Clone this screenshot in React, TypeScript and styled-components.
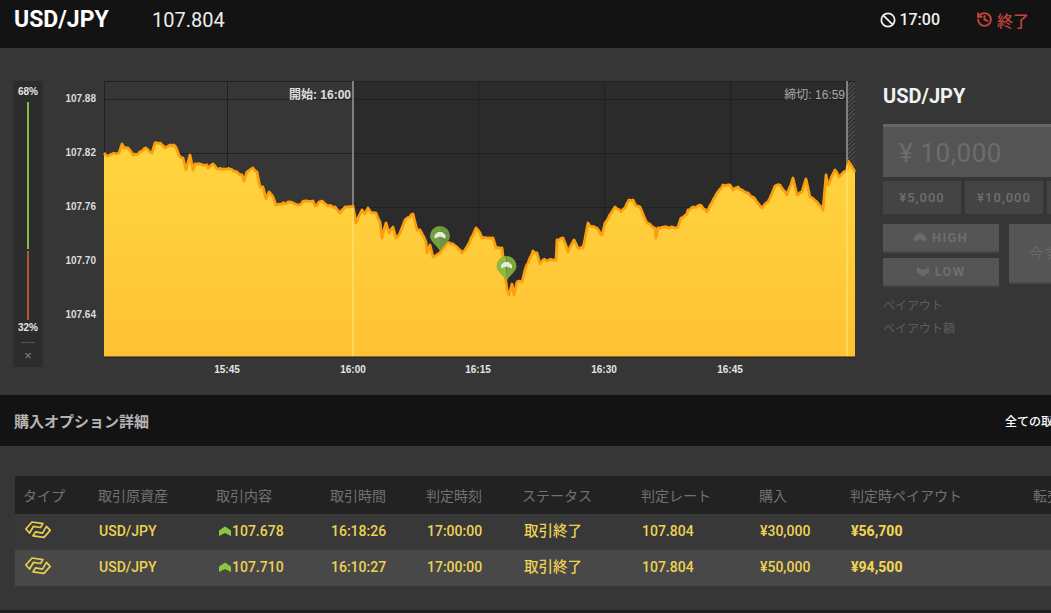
import React from 'react';
import styled, { createGlobalStyle } from 'styled-components';
import { Ban, History } from 'lucide-react';

const Global = createGlobalStyle`
  html, body { margin: 0; padding: 0; background: #363636; overflow: hidden; }
  body { font-family: Roboto, "Noto Sans CJK JP", sans-serif; }
`;

const Page = styled.div`
  width: 1051px;
  height: 613px;
  overflow: hidden;
  background: #1f1f1f;
`;

const Header = styled.header`
  height: 48px;
  box-sizing: border-box;
  padding: 0 22px 9px 14px;
  background: #141314;
  display: flex;
  align-items: center;
  color: #fff;
`;
const Pair = styled.div`
  font-size: 23px;
  font-weight: 700;
  width: 138px;
`;
const Rate = styled.div`
  font-size: 20px;
  font-weight: 400;
  color: #eee;
  flex: 1;
  padding-top: 1px;
`;
const Expiry = styled.div<{ $red?: boolean }>`
  display: flex;
  align-items: center;
  gap: ${p => (p.$red ? 4 : 3)}px;
  font-size: 16px;
  font-weight: 500;
  color: ${p => (p.$red ? '#c0443a' : '#f0f0f0')};
  margin-left: ${p => (p.$red ? 36 : 0)}px;
`;

const Main = styled.section`
  height: 347px;
  box-sizing: border-box;
  padding: 33px 0 0 13px;
  background: #363636;
  display: flex;
  align-items: flex-start;
`;
const Sentiment = styled.div`
  width: 30px;
  height: 286px;
  background: #2c2c2c;
  flex: none;
  display: flex;
  flex-direction: column;
  align-items: center;
  font: 700 10px "Liberation Sans", sans-serif;
  color: #e4e4e4;
  padding-top: 5px;
  box-sizing: border-box;
`;
const Bar = styled.div<{ $color: string; $h: number; $gap: number }>`
  width: 2px;
  height: ${p => p.$h}px;
  margin-top: ${p => p.$gap}px;
  background: ${p => p.$color};
`;
const Pct = styled.div<{ $mt?: number }>`
  line-height: 12px;
  margin-top: ${p => p.$mt ?? 0}px;
`;
const Close = styled.div`
  width: 14px;
  margin-top: 8px;
  padding-top: 5px;
  border-top: 1px solid #555;
  text-align: center;
  font: 400 13px "Liberation Sans", sans-serif;
  color: #8a8a8a;
`;
const ChartSvg = styled.svg`
  flex: none;
  display: block;
  text {
    font-family: "Liberation Sans", "Noto Sans CJK JP", sans-serif;
  }
`;

const Side = styled.aside`
  flex: none;
  width: 300px;
  margin-left: 27px;
  display: flex;
  flex-direction: column;
`;
const SideTitle = styled.h2`
  margin: 3px 0 0;
  font-size: 20px;
  line-height: 24px;
  font-weight: 700;
  color: #f2f2f2;
`;
const Amount = styled.div`
  margin-top: 16px;
  height: 53px;
  box-sizing: border-box;
  border-top: 3px solid #666;
  background: #545454;
  color: #6c6c6c;
  font-size: 26px;
  line-height: 52px;
  padding-left: 16px;
  letter-spacing: 0.6px;
`;
const Chips = styled.div`
  margin-top: 4px;
  display: flex;
  gap: 4px;
`;
const Chip = styled.div`
  width: 78px;
  height: 33px;
  background: #444;
  color: #6f6f6f;
  font-size: 13px;
  font-weight: 500;
  letter-spacing: 1px;
  display: flex;
  align-items: center;
  justify-content: center;
  flex: none;
`;
const Trade = styled.div`
  margin-top: 10px;
  display: flex;
  gap: 10px;
`;
const Dirs = styled.div`
  width: 116px;
  display: flex;
  flex-direction: column;
  gap: 5px;
`;
const Dir = styled.div`
  height: 29px;
  box-sizing: border-box;
  background: #555;
  border-bottom: 2px solid #484848;
  color: #6e6e6e;
  font-size: 13px;
  font-weight: 700;
  letter-spacing: 1.2px;
  display: flex;
  align-items: center;
  justify-content: center;
  gap: 6px;
`;
const Now = styled.div`
  width: 130px;
  height: 60px;
  box-sizing: border-box;
  background: #555;
  border-bottom: 2px solid #484848;
  color: #6a6a6a;
  font-size: 14px;
  line-height: 58px;
  padding-left: 20px;
`;
const Payout = styled.div<{ $mt: number }>`
  margin-top: ${p => p.$mt}px;
  font-size: 12px;
  line-height: 16px;
  color: #5c5c5c;
`;

const SectionBar = styled.div`
  height: 51px;
  background: #141314;
  display: flex;
  align-items: center;
  justify-content: space-between;
  padding-left: 14px;
`;
const SectionTitle = styled.h3`
  margin: 0;
  font-size: 15px;
  font-weight: 700;
  color: #b4b4b4;
`;
const SectionLink = styled.div`
  width: 46px;
  overflow: hidden;
  white-space: nowrap;
  font-size: 12px;
  font-weight: 500;
  color: #fff;
`;

const Lower = styled.section`
  height: 164px;
  box-sizing: border-box;
  padding: 30px 0 0 15px;
  background: #363636;
`;
const cols = '75px 118px 114px 96px 96px 119px 118px 91px 183px 60px';
const HeadRow = styled.div`
  display: grid;
  grid-template-columns: ${cols};
  height: 38px;
  align-items: center;
  background: #222;
  color: #717171;
  font-size: 14px;
  white-space: nowrap;
  padding-left: 8px;
  padding-bottom: 1px;
  box-sizing: border-box;
`;
const Row = styled.div<{ $alt?: boolean }>`
  display: grid;
  grid-template-columns: ${cols};
  height: 36px;
  box-sizing: border-box;
  padding: 0 0 2px 9px;
  align-items: center;
  background: ${p => (p.$alt ? '#484848' : '#383838')};
  color: #eed254;
  font-size: 14px;
  font-weight: 500;
  white-space: nowrap;
`;
const TypeCell = styled.div`
  display: flex;
  padding-left: 1px;
  margin-top: -3px;
`;
const Strike = styled.div`
  display: flex;
  align-items: center;
  gap: 1px;
  padding-left: 2px;
`;
const Status = styled.div`
  font-size: 14.5px;
  line-height: 16px;
  padding-left: 1px;
  margin-top: 2px;
`;
const Bold = styled.div`
  font-weight: 800;
`;

const Chev = ({ color, down }: { color: string; down?: boolean }) => (
  <svg width="12" height="11" viewBox="0 0 12 11" style={down ? { transform: 'scaleY(-1)' } : undefined}>
    <path d="M0 4.5 6 0.5l6 4V10L6 7 0 10z" fill={color} />
  </svg>
);

const TypeIcon = () => (
  <svg width="27" height="20" viewBox="0 0 27 20" fill="none" stroke="#e8cf50" strokeWidth="1.7" strokeLinejoin="round">
    <path d="M0.8 9 7 2 18 3.6 15.5 7.5 8.5 6.3 4.6 13z" />
    <path d="M25.2 10.4 19 17.4 8 15.8 10.5 11.9 17.5 13.1 21.4 6.4z" />
  </svg>
);

const raw: [number, number][] = [
  [104,153],[107,156],[112,154],[119,153],[122,144],[124,148],[128,148],[133,155],[138,154],[146,148],[152,153],[155,143],[160,143],[165,148],[170,145],[175,146],[180,157],[183,158],[186,170],[190,155],[193,170],[195,164],[207,165],[208,168],[213,164],[217,169],[230,169],[242,175],[244,181],[247,172],[253,168],[257,172],[260,187],[263,187],[266,199],[269,192],[273,197],[276,205],[280,204],[290,202],[298,205],[305,201],[313,201],[315,206],[322,201],[328,206],[335,207],[340,213],[345,207],[350,207],
  [353,206],[356,223],[362,210],[365,214],[368,208],[372,213],[376,213],[380,222],[382,238],[386,223],[389,233],[393,227],[396,238],[399,235],[405,220],[413,214],[417,230],[420,230],[426,242],[427,253],[430,245],[433,257],[440,253],[447,243],[453,244],[457,247],[462,253],[468,245],[476,228],[480,233],[482,238],[493,238],[496,248],[502,248],[507,290],[509,295],[512,284],[514,295],[517,282],[522,282],[525,270],[533,251],[537,253],[540,264],[543,260],[556,260],[557,240],[563,238],[568,252],[574,240],[578,248],[583,248],[588,223],[590,226],[597,228],[602,235],[605,223],[615,207],[621,212],[625,208],[629,200],[633,200],[636,206],[640,207],[647,223],[655,228],[656,238],[658,228],[678,227],[681,218],[687,214],[688,210],[700,205],
  [707,212],[715,197],[723,185],[730,185],[733,190],[738,187],[745,192],[753,197],[762,208],[768,202],[775,186],[780,185],[787,195],[793,178],[797,195],[802,192],[806,179],[810,197],[817,202],[823,210],[826,175],[828,185],[835,170],[839,177],[847,170],[848,161],[852,167],[855,172],
];

// The price series ticks more finely than the hand-read anchors: add a small repeatable tick noise.
const jitter = (x: number) => {
  const s = Math.sin(x * 12.9898) * 43758.5453;
  return (s - Math.floor(s) - 0.5) * 1.8;
};
const ticks: [number, number][] = [];
raw.forEach(([x, y], i) => {
  const next = raw[i + 1];
  ticks.push([x, y]);
  if (!next) return;
  const steps = Math.floor((next[0] - x) / 1.6);
  for (let k = 1; k < steps; k++) {
    const t = k / steps;
    const px = x + (next[0] - x) * t;
    ticks.push([px, y + (next[1] - y) * t + jitter(px)]);
  }
});
const line = ticks.map(([x, y]) => `${x.toFixed(1)},${y.toFixed(1)}`).join(' ');
const area = `104,357 ${line} 855,357`;
const yLabels: [string, number][] = [['107.88', 99], ['107.82', 153], ['107.76', 207], ['107.70', 261], ['107.64', 315]];
const xLabels: [string, number][] = [['15:45', 227], ['16:00', 353], ['16:15', 478], ['16:30', 604], ['16:45', 730]];

const Pin = ({ x, y, a, b }: { x: number; y: number; a: string; b: string }) => (
  <g transform={`translate(${x} ${y})`}>
    <path d="M0 0C-3-6-10-9-10-15a10 10 0 0 1 10-10z" fill={a} />
    <path d="M0 0C3-6 10-9 10-15a10 10 0 0 0-10-10z" fill={b} />
    <path d="M-5.5-16-2-19H2L5.5-16V-12.5L0-14.5-5.5-12.5z" fill="#e6ebdf" />
  </g>
);

const Chart = () => (
  <ChartSvg width="813" height="300" viewBox="43 81 813 300">
    <defs>
      <linearGradient id="fill" x1="0" y1="0" x2="0" y2="1">
        <stop offset="0" stopColor="#ffd53f" />
        <stop offset="1" stopColor="#ffc235" />
      </linearGradient>
      <pattern id="hatch" width="3" height="3" patternUnits="userSpaceOnUse" patternTransform="rotate(45)">
        <rect width="3" height="3" fill="#2c2c2c" />
        <rect width="1.2" height="3" fill="#555" />
      </pattern>
    </defs>
    <rect x="104" y="81" width="249" height="276" fill="#363636" />
    <rect x="353" y="81" width="502" height="276" fill="#2b2b2b" />
    <rect x="848" y="81" width="7" height="90" fill="url(#hatch)" />
    <g stroke="#202020" strokeWidth="1" shapeRendering="crispEdges">
      <line x1="104" x2="855" y1="81.5" y2="81.5" />
      <line x1="104.5" x2="104.5" y1="81" y2="357" />
      {yLabels.map(([l, y]) => <line key={l} x1="104" x2="848" y1={y + 0.5} y2={y + 0.5} />)}
      {xLabels.map(([l, x]) => <line key={l} x1={x + 0.5} x2={x + 0.5} y1="81" y2="357" />)}
    </g>
    <polygon points={area} fill="url(#fill)" />
    <polyline points={line} fill="none" stroke="#fb9f0c" strokeWidth="2.8" strokeLinejoin="round" />
    <line x1="353" x2="353" y1="81" y2="205" stroke="#808080" strokeWidth="2" />
    <line x1="353" x2="353" y1="208" y2="357" stroke="#ffe07a" strokeWidth="2" strokeOpacity="0.65" />
    <line x1="847" x2="847" y1="81" y2="162" stroke="#808080" strokeWidth="2" />
    <line x1="847" x2="847" y1="165" y2="357" stroke="#ffe07a" strokeWidth="2" strokeOpacity="0.65" />
    <line x1="104" x2="855" y1="357" y2="357" stroke="#1c1c1c" strokeWidth="1" />
    <Pin x={440} y={251} a="#749f3f" b="#6b9640" />
    <Pin x={506.5} y={281} a="#90b83e" b="#7ea53b" />
    {yLabels.map(([l, y]) => (
      <text key={l} x="96" y={y + 2.5} textAnchor="end" fontSize="10" fontWeight="700" fill="#dcdcdc">{l}</text>
    ))}
    {xLabels.map(([l, x]) => (
      <text key={l} x={x} y="373" textAnchor="middle" fontSize="10" fontWeight="700" fill="#e4e4e4">{l}</text>
    ))}
    <text x="351" y="99" textAnchor="end" fontSize="12" fontWeight="700" fill="#dedede">開始: 16:00</text>
    <text x="845" y="99" textAnchor="end" fontSize="12" fill="#a8a8a8">締切: 16:59</text>
  </ChartSvg>
);

const rows = [
  { time: '16:18:26', strike: '107.678', buy: '¥30,000', pay: '¥56,700' },
  { time: '16:10:27', strike: '107.710', buy: '¥50,000', pay: '¥94,500' },
];
const heads = ['タイプ', '取引原資産', '取引内容', '取引時間', '判定時刻', 'ステータス', '判定レート', '購入', '判定時ペイアウト', '転売'];

export default function App() {
  return (
    <Page>
      <Global />
      <Header>
        <Pair>USD/JPY</Pair>
        <Rate>107.804</Rate>
        <Expiry><Ban size={16} strokeWidth={2.6} />17:00</Expiry>
        <Expiry $red><History size={17} strokeWidth={2.8} />終了</Expiry>
      </Header>
      <Main>
        <Sentiment>
          <Pct>68%</Pct>
          <Bar $color="#8ab84a" $h={147} $gap={4} />
          <Bar $color="#b3543a" $h={69} $gap={2} />
          <Pct $mt={2}>32%</Pct>
          <Close>×</Close>
        </Sentiment>
        <Chart />
        <Side>
          <SideTitle>USD/JPY</SideTitle>
          <Amount>¥ 10,000</Amount>
          <Chips>
            <Chip>¥5,000</Chip>
            <Chip>¥10,000</Chip>
            <Chip>¥30,000</Chip>
          </Chips>
          <Trade>
            <Dirs>
              <Dir><Chev color="#6a6a6a" />HIGH</Dir>
              <Dir><Chev color="#6a6a6a" down />LOW</Dir>
            </Dirs>
            <Now>今すぐ購入</Now>
          </Trade>
          <Payout $mt={11}>ペイアウト</Payout>
          <Payout $mt={7}>ペイアウト額</Payout>
        </Side>
      </Main>
      <SectionBar>
        <SectionTitle>購入オプション詳細</SectionTitle>
        <SectionLink>全ての取引</SectionLink>
      </SectionBar>
      <Lower>
        <HeadRow>
          {heads.map(h => <div key={h}>{h}</div>)}
        </HeadRow>
        {rows.map((r, i) => (
          <Row key={r.time} $alt={i === 1}>
            <TypeCell><TypeIcon /></TypeCell>
            <div>USD/JPY</div>
            <Strike><Chev color="#8cc63f" />{r.strike}</Strike>
            <div>{r.time}</div>
            <div>17:00:00</div>
            <Status>取引終了</Status>
            <div>107.804</div>
            <div>{r.buy}</div>
            <Bold>{r.pay}</Bold>
            <div />
          </Row>
        ))}
      </Lower>
    </Page>
  );
}
